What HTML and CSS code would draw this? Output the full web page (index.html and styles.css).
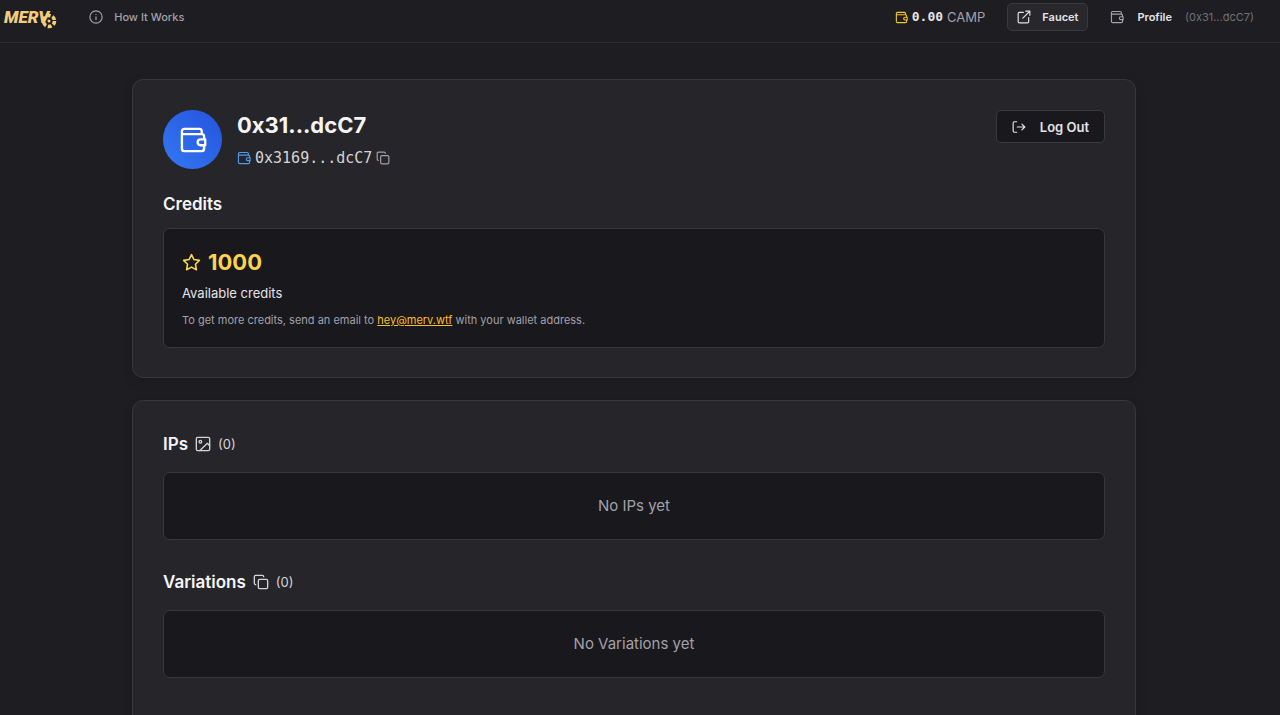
FILE: index.html
```html
<!DOCTYPE html>
<html lang="en">
<head>
    <meta charset="UTF-8">
    <meta name="viewport" content="width=device-width, initial-scale=1.0">
    <title>Profile - MERV</title>
    <link rel="stylesheet" href="styles.css">
</head>
<body>
    <!-- Shared icons -->
    <svg class="icon-defs" aria-hidden="true">
        <symbol id="icon-wallet" viewBox="0 0 24 24">
            <path d="M19.500 7V4.500a2 2 0 0 0-2-2h-13a2 2 0 0 0-2 2v15a2 2 0 0 0 2 2h15a2 2 0 0 0 2-2V17M2.500 7h17a2 2 0 0 1 2 2v2"/>
            <path d="M22.500 11.500h-4a2.500 2.500 0 0 0 0 5h4z"/>
        </symbol>
        <symbol id="icon-copy" viewBox="0 0 24 24">
            <rect x="8" y="8" width="14" height="14" rx="2"/>
            <path d="M4 16a2 2 0 0 1-2-2V4a2 2 0 0 1 2-2h10a2 2 0 0 1 2 2"/>
        </symbol>
    </svg>

    <header class="navbar">
        <a class="logo" href="#" aria-label="MERV home">
            <span class="logo-text">MERV</span>
            <svg class="logo-reel" viewBox="0 0 16 16">
                <circle cx="8" cy="8" r="5.500" fill="none" stroke="#f2cd7c" stroke-width="3.600" stroke-dasharray="3.860 1.900"/>
                <circle cx="8" cy="8" r="1.500" fill="#f2cd7c"/>
            </svg>
        </a>
        <a class="nav-link" href="#">
            <svg class="icon" viewBox="0 0 24 24"><circle cx="12" cy="12" r="10.500"/><path d="M12 16.500V11.500M12 7.500h.01"/></svg>
            How It Works
        </a>
        <div class="nav-right">
            <div class="balance">
                <svg class="icon icon-small"><use href="#icon-wallet"/></svg>
                <span class="balance-value">0.00</span>
                <span class="balance-unit">CAMP</span>
            </div>
            <button class="btn btn-faucet" type="button">
                <svg class="icon" viewBox="0 0 24 24"><path d="M11 4H4a2 2 0 0 0-2 2v14a2 2 0 0 0 2 2h14a2 2 0 0 0 2-2v-7M15 2h7v7M22 2 10 14"/></svg>
                Faucet
            </button>
            <a class="profile-link" href="#">
                <svg class="icon"><use href="#icon-wallet"/></svg>
                <span class="profile-name">Profile</span>
                <span class="profile-address">(0x31...dcC7)</span>
            </a>
        </div>
    </header>

    <main class="page">
        <section class="card">
            <div class="profile-header">
                <div class="avatar">
                    <svg class="icon icon-large"><use href="#icon-wallet"/></svg>
                </div>
                <div class="profile-info">
                    <h1>0x31...dcC7</h1>
                    <div class="wallet-address">
                        <svg class="icon icon-address"><use href="#icon-wallet"/></svg>
                        <span>0x3169...dcC7</span>
                        <button class="copy-btn" type="button" aria-label="Copy address">
                            <svg class="icon"><use href="#icon-copy"/></svg>
                        </button>
                    </div>
                </div>
                <button class="btn btn-logout" type="button">
                    <svg class="icon" viewBox="0 0 24 24"><path d="M8 3H4a2 2 0 0 0-2 2v14a2 2 0 0 0 2 2h4M9 12h13M17 7l5 5-5 5"/></svg>
                    Log Out
                </button>
            </div>

            <h2>Credits</h2>
            <div class="panel credits">
                <div class="credits-value">
                    <svg class="icon icon-star" viewBox="0 0 24 24"><path d="m12 2 3.100 6.300 6.900 1-5 4.900 1.200 6.900L12 17.800 5.800 21.100 7 14.200 2 9.300l6.900-1z"/></svg>
                    1000
                </div>
                <p class="credits-label">Available credits</p>
                <p class="credits-note">To get more credits, send an email to <a href="mailto:hey@merv.wtf">hey@merv.wtf</a> with your wallet address.</p>
            </div>
        </section>

        <section class="card">
            <div class="section-title">
                <h2>IPs</h2>
                <svg class="icon icon-section" viewBox="0 0 24 24"><rect x="2" y="2" width="20" height="20" rx="2"/><circle cx="8" cy="8.500" r="2"/><path d="M22 14.500 18.500 11 7 22"/></svg>
                <span>(0)</span>
            </div>
            <div class="panel empty">No IPs yet</div>

            <div class="section-title">
                <h2>Variations</h2>
                <svg class="icon icon-section"><use href="#icon-copy"/></svg>
                <span>(0)</span>
            </div>
            <div class="panel empty">No Variations yet</div>
        </section>
    </main>
</body>
</html>
```
FILE: styles.css
```css
* {
    margin: 0;
    padding: 0;
    box-sizing: border-box;
}

html {
    background: #1e1d22;
}

body {
    font-family: Inter, 'Liberation Sans', sans-serif;
    font-size: 13px;
    line-height: 20px;
    color: #f4f4f5;
    height: 100vh;
    overflow: hidden; /* second card runs past the fold */
}

a {
    color: inherit;
    text-decoration: none;
}

.icon-defs {
    position: absolute;
    width: 0;
    height: 0;
}

/* Icons */
.icon {
    width: 14px;
    height: 14px;
    flex-shrink: 0;
    fill: none;
    stroke: currentColor;
    stroke-width: 2;
    stroke-linecap: round;
    stroke-linejoin: round;
}

.icon-small {
    width: 13px;
    height: 13px;
    color: #f5c723;
}

.icon-large {
    width: 28px;
    height: 28px;
}

.icon-section {
    width: 16px;
    height: 16px;
    color: #d4d4d8;
}

.icon-address {
    color: #4f9be8;
}

/* Navbar */
.navbar {
    display: flex;
    align-items: center;
    padding: 3px 26px 11px 4px;
    font-size: 11px;
    border-bottom: 1px solid #2b2a2f;
}

.logo {
    display: flex;
    align-items: center;
    margin-right: 32px;
}

.logo-text {
    font-family: Roboto, sans-serif;
    font-size: 17px;
    font-weight: 900;
    font-style: italic;
    color: #f2cd7c;
}

.logo-reel {
    width: 16px;
    height: 16px;
    margin-top: 8px;
    margin-left: -8px;
}

.nav-link {
    display: flex;
    align-items: center;
    gap: 11px;
    font-weight: 500;
    color: #a1a1aa;
}

.nav-right {
    display: flex;
    align-items: center;
    gap: 22px;
    margin-left: auto;
}

.balance {
    display: flex;
    align-items: center;
    gap: 4px;
    font-size: 13px;
}

.balance-value {
    font-family: 'DejaVu Sans Mono', monospace;
    font-weight: 700;
    color: #e4e4e7;
}

.balance-unit {
    color: #a1a1aa;
}

.btn {
    display: flex;
    align-items: center;
    font-family: inherit;
    color: #e4e4e7;
    border: 1px solid #3a393e;
    border-radius: 5px;
    cursor: pointer;
}

.btn-faucet {
    gap: 11px;
    height: 28px;
    padding: 0 9px;
    font-size: 11px;
    font-weight: 600;
    background: #28272c;
}

.profile-link {
    display: flex;
    align-items: center;
    gap: 13px;
    color: #a1a1aa;
}

.profile-name {
    font-weight: 600;
    color: #e4e4e7;
}

.profile-address {
    color: #71717a;
}

/* Cards */
.page {
    display: flex;
    flex-direction: column;
    gap: 22px;
    max-width: 1016px;
    margin: 0 auto;
    padding: 36px 12px 36px 0;
}

.card {
    padding: 30px 30px 29px;
    background: #26252a;
    border: 1px solid #38373c;
    border-radius: 11px;
    box-shadow: 0 4px 12px rgba(0, 0, 0, 0.12);
}

.card:last-child {
    padding-bottom: 60px;
}

.card h2 {
    font-size: 17px;
    font-weight: 600;
    line-height: 26px;
}

.profile-header {
    display: flex;
    align-items: flex-start;
    margin-bottom: 22px;
}

.avatar {
    display: flex;
    align-items: center;
    justify-content: center;
    width: 59px;
    height: 59px;
    margin-right: 15px;
    border-radius: 50%;
    color: #ffffff;
    background: linear-gradient(to top right, #3478f2, #2453de);
}

.profile-info h1 {
    font-size: 22px;
    font-weight: 700;
    line-height: 30px;
}

.wallet-address {
    display: flex;
    align-items: center;
    gap: 4px;
    margin-top: 8px;
    font-family: 'DejaVu Sans Mono', monospace;
    font-size: 15px;
    color: #d4d4d8;
}

.copy-btn {
    display: flex;
    color: #a1a1aa;
    background: none;
    border: none;
    cursor: pointer;
}

.btn-logout {
    gap: 14px;
    height: 33px;
    margin-left: auto;
    padding: 0 15px;
    font-size: 13px;
    font-weight: 600;
    background: #19181c;
}

.panel {
    background: #19181c;
    border: 1px solid #38373c;
    border-radius: 7px;
}

/* Credits */
.credits {
    margin-top: 11px;
    padding: 18px;
}

.credits-value {
    display: flex;
    align-items: center;
    gap: 7px;
    font-size: 22px;
    font-weight: 700;
    line-height: 30px;
    color: #fcd34d;
}

.icon-star {
    width: 19px;
    height: 19px;
}

.credits-label {
    margin-top: 6px;
    color: #e4e4e7;
}

.credits-note {
    margin-top: 8px;
    font-size: 11px;
    line-height: 18px;
    color: #a1a1aa;
}

.credits-note a {
    color: #fbbf24;
    text-decoration: underline;
}

/* IPs and variations */
.section-title {
    display: flex;
    align-items: center;
    gap: 7px;
    margin-bottom: 15px;
    color: #d4d4d8;
}

.section-title h2 {
    color: #f4f4f5;
}

.empty {
    padding: 23px;
    font-size: 15px;
    text-align: center;
    color: #a1a1aa;
}

.empty + .section-title {
    margin-top: 29px;
}
```
